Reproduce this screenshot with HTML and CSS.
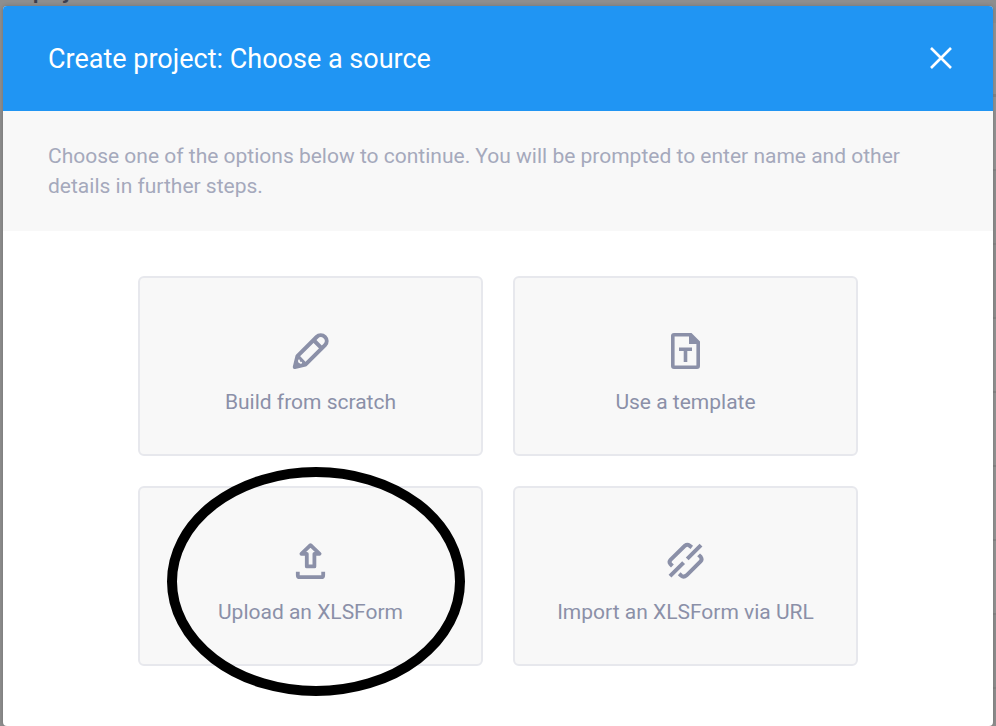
FILE: index.html
```html
<!DOCTYPE html>
<html lang="en">
<head>
<meta charset="utf-8">
<title>Create project</title>
<meta name="viewport" content="width=device-width, initial-scale=1">
<link rel="stylesheet" href="styles.css">
</head>
<body>
<div class="page" aria-hidden="true">
  <div class="page-heading">project</div>
  <div class="page-rows">
    <div class="row row-head"></div>
    <div class="row"></div>
    <div class="row row-gap"></div>
    <div class="row row-gap"></div>
    <div class="row"></div>
    <div class="row"></div>
    <div class="row"></div>
    <div class="row"></div>
    <div class="row row-gap"></div>
  </div>
</div>
<main class="modal" role="dialog" aria-labelledby="title">
  <header class="modal-header">
    <h1 id="title">Create project: Choose a source</h1>
    <button class="close" type="button" aria-label="Close">
      <svg viewBox="0 0 24 24" width="24" height="24"><path d="M2 2 22 22M22 2 2 22" fill="none" stroke="currentColor" stroke-width="2.6"/></svg>
    </button>
  </header>
  <p class="intro">Choose one of the options below to continue. You will be prompted to enter name and other details in further steps.</p>
  <div class="options">
    <button class="option" type="button">
      <svg class="icon" viewBox="1 0 60 60"><g fill="none" stroke="currentColor" stroke-width="4" stroke-linejoin="round"><path d="M14.8 47 17.4 36.2 36.6 17A5.8 5.8 0 0 1 45 25.2L25.4 44.6Z"/><path d="M33.5 20 41.8 28.3M17.4 36.2 25.4 44.6"/></g><path d="M13.5 48 16 39.5 22 45.8Z" fill="currentColor"/><path d="M18.8 39.6 19.4 42.2 22 42.8" fill="none" stroke="#f8f8f8" stroke-width="1.6"/></svg>
      <span>Build from scratch</span>
    </button>
    <button class="option" type="button">
      <svg class="icon" viewBox="1 0 60 60"><path fill="currentColor" fill-rule="evenodd" d="M19 13H36.5L45 21.5V46A3 3 0 0 1 42 49H19A3 3 0 0 1 16 46V16A3 3 0 0 1 19 13ZM19.6 16.6V45.4H41.4V24H34V16.6Z"/><path fill="currentColor" d="M24 27.5H37V31H32.3V42H28.7V31H24Z"/></svg>
      <span>Use a template</span>
    </button>
    <button class="option" type="button">
      <svg class="icon" viewBox="1 0 60 60"><g fill="none" stroke="currentColor" stroke-width="3.8"><path stroke-linejoin="round" d="M30.5 15.2 39.6 23.8H34.4V36.4H26.8V23.8H21.4Z"/><path d="M17.8 41.8V45.2Q17.8 47.2 19.8 47.2H41.2Q43.2 47.2 43.2 45.2V41.8"/></g></svg>
      <span>Upload an XLSForm</span>
      <svg class="marker" viewBox="0 0 298 229" aria-hidden="true"><ellipse cx="149" cy="114.5" rx="144" ry="109.5" fill="none" stroke="#000" stroke-width="10"/></svg>
    </button>
    <button class="option" type="button">
      <svg class="icon" viewBox="1 0 60 60"><g fill="none" stroke="currentColor" stroke-width="4"><path d="M17.4 36 15.3 33.9Q13.7 31.8 15.5 29.8L29.8 15.8Q32.3 13.9 34.5 15.6L36.8 17.4M43.6 24.8 45.7 26.9Q47.5 29.4 45.6 31.3L31.6 45.3Q28.7 47.7 26.4 45.8L24.2 43.8"/><path d="M32.2 28.9 46 15.1M15 46.2 28.6 32.6"/></g></svg>
      <span>Import an XLSForm via URL</span>
    </button>
  </div>
</main>
</body>
</html>
```
FILE: styles.css
```css
* {
  box-sizing: border-box;
}

body {
  margin: 0;
  min-height: 100vh;
  overflow: hidden;
  background: #8e8e8e;
  font-family: Roboto, "Liberation Sans", sans-serif;
  font-size: 21px;
  line-height: 30px;
  color: #8b90a8;
}

/* Dimmed page behind the dialog */
.page {
  position: absolute;
  inset: 0;
  overflow: hidden;
}

.page-heading {
  height: 22px;
  padding-left: 33px;
  margin-top: -23px;
  font-weight: 700;
  color: #3b3e4d;
}

.page-rows {
  margin: 24px 0 0 32px;
  background: #939393;
}

.row {
  height: 74px;
  border-bottom: 2px solid #858585;
}

.row-head {
  border-bottom-width: 3px;
}

.row-gap {
  background: #8e8e8e;
}

.modal {
  position: relative;
  min-height: calc(100vh - 6px);
  margin: 6px 3px 0;
  border-radius: 4px;
  overflow: hidden;
  background: #fff;
  box-shadow: 0 0 4px rgba(0, 0, 0, 0.2);
}

.modal-header {
  display: flex;
  align-items: center;
  justify-content: space-between;
  height: 105px;
  padding: 0 40px 0 45px;
  background: #2095f3;
  color: #fff;
}

h1 {
  margin: 0;
  font-size: 27px;
  font-weight: 400;
}

.close {
  display: flex;
  padding: 0 0 2px;
  border: 0;
  background: none;
  color: inherit;
  cursor: pointer;
}

.intro {
  margin: 0;
  padding: 30px 45px;
  background: #f8f8f8;
  color: #a5a9bc;
}

.options {
  display: grid;
  grid-template-columns: 1fr 1fr;
  gap: 30px;
  max-width: 720px;
  margin: 45px auto 60px;
}

.option {
  position: relative;
  display: flex;
  flex-direction: column;
  align-items: center;
  justify-content: center;
  min-height: 180px;
  padding: 5px 0 0;
  border: 2px solid #e7e8ed;
  border-radius: 6px;
  background: #f8f8f8;
  color: #8b90a8;
  font: inherit;
  cursor: pointer;
}

.icon {
  width: 60px;
  height: 60px;
  margin-bottom: 7px;
}

.marker {
  position: absolute;
  top: -21px;
  left: 27px;
  width: 298px;
  height: 229px;
  pointer-events: none;
}
```
